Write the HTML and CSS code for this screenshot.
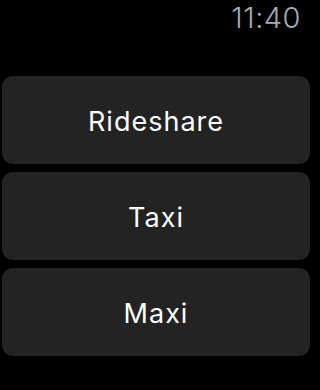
FILE: index.html
```html
<!DOCTYPE html>
<html>
<head>
<meta charset="utf-8">
<link rel="stylesheet" href="styles.css">
</head>
<body>
<div class="screen">
  <div class="status"><span class="time">11:40</span></div>
  <div class="menu">
    <div class="btn">Rideshare</div>
    <div class="btn">Taxi</div>
    <div class="btn">Maxi</div>
  </div>
</div>
</body>
</html>
```
FILE: styles.css
```css
html, body {
  margin: 0;
  padding: 0;
  background: #000;
}
.screen {
  width: 312px;
  height: 390px;
  display: flex;
  flex-direction: column;
  font-family: Inter, "Noto Sans", sans-serif;
}
.status {
  height: 76px;
  display: flex;
  justify-content: flex-end;
  align-items: flex-start;
  padding-right: 11px;
  box-sizing: border-box;
}
.time {
  color: #a9a9b2;
  font-size: 29px;
  font-weight: 300;
  line-height: 36px;
  letter-spacing: 0.5px;
}
.menu {
  display: flex;
  flex-direction: column;
  gap: 8px;
  padding: 0 2px;
}
.btn {
  height: 88px;
  box-sizing: border-box;
  padding-top: 3px;
  background: #232323;
  border-radius: 11px;
  display: flex;
  align-items: center;
  justify-content: center;
  color: #fff;
  font-size: 27px;
  font-weight: 400;
  letter-spacing: 1px;
}
```
